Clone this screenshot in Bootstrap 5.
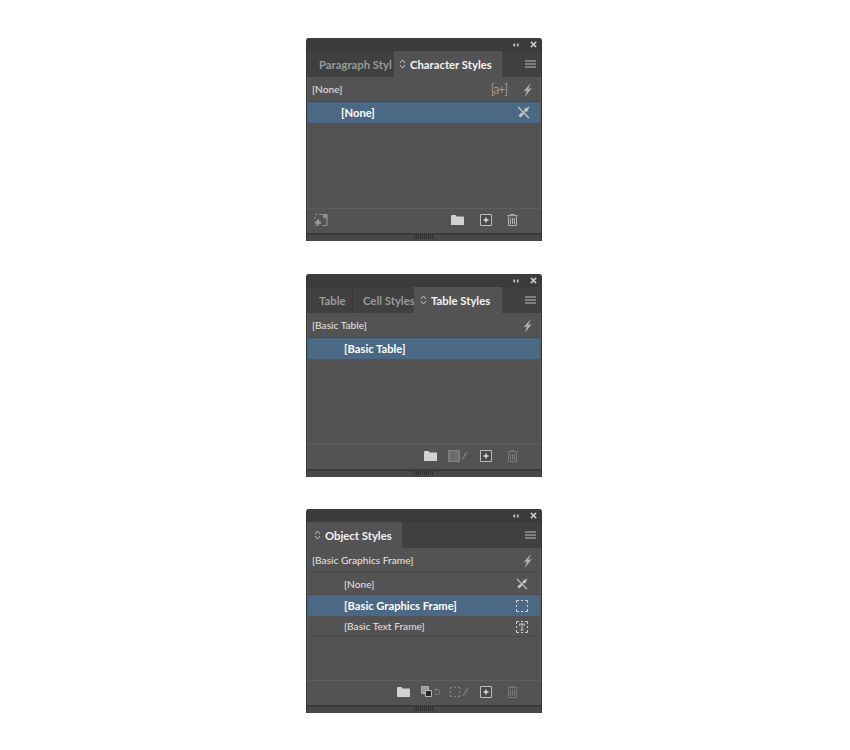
<!DOCTYPE html>
<html lang="en">
<head>
    <meta charset="UTF-8">
    <title>Styles panels</title>
    <link rel="stylesheet" href="https://cdn.jsdelivr.net/npm/bootstrap@5.3.0/dist/css/bootstrap.min.css">
    <style>
        body {
            background-color: #fff;
            font-family: "Lato", "Liberation Sans", sans-serif;
        }
        .panel-stack {
            width: 236px;
            margin-left: 306px;
            padding-top: 38px;
        }
        .style-panel {
            height: 203px;
            background-color: #535353;
            border-radius: 3px 3px 0 0;
            border-left: 1px solid #3a3a3a;
            border-right: 1px solid #3a3a3a;
            color: #e6e6e6;
            font-size: 10.2px;
            overflow: hidden;
        }
        .panel-tall { height: 204px; }
        .gap-a { margin-bottom: 33px; }
        .gap-b { margin-bottom: 32px; }
        .title-bar {
            height: 13px;
            background-color: #3b3b3b;
            padding-right: 4px;
            gap: 11px;
        }
        .tab-strip {
            height: 26px;
            background-color: #404040;
        }
        .tab-item {
            height: 26px;
            line-height: 27px;
            font-size: 11.3px;
            font-weight: 700;
            color: #9a9a9a;
            white-space: nowrap;
            overflow: hidden;
            border-right: 1px solid #383838;
            flex: none;
        }
        .tab-on {
            background-color: #535353;
            color: #f4f4f4;
            border-right: 0;
        }
        .tab-on svg { margin-right: 4px; }
        .tab-para { width: 87px; padding-left: 12px; border-right: 0; }
        .tab-char { width: 108px; padding-left: 5px; }
        .tab-table { width: 46px; padding-left: 12px; }
        .tab-cell { width: 61px; padding-left: 10px; border-right: 0; }
        .tab-tstyles { width: 88px; padding-left: 6px; }
        .tab-object { width: 95px; padding-left: 7px; }
        .tab-menu { margin-left: auto; margin-right: 5px; }
        .panel-list {
            min-height: 0;
            border-left: 1px solid #5b5b5b;
            border-right: 1px solid #5b5b5b;
        }
        .style-row {
            height: 22px;
            padding-top: 1px;
            line-height: 21px;
            border-bottom: 1px solid #484848;
            padding-right: 10px;
        }
        .row-head { height: 25px; padding-left: 4px; padding-right: 8px; }
        .row-sel {
            height: 21px;
            padding-top: 0;
            background-color: #4b6884;
            border-bottom: 0;
            color: #fff;
            font-size: 11.2px;
            font-weight: 700;
        }
        .row-plain { height: 21px; }
        .row-indent { padding-left: 33px; }
        .row-indent-b { padding-left: 36px; padding-right: 12px; }
        .plus-glyph {
            font-size: 13px;
            font-weight: 300;
            letter-spacing: -1.2px;
            color: #c4c4c4;
            margin-right: 16px;
        }
        .panel-foot {
            height: 25px;
            padding: 0 23px 2px 7px;
            border-top: 1px solid #5e5e5e;
        }
        .mr-8 { margin-right: 8px; }
        .mr-11 { margin-right: 11px; }
        .mr-12 { margin-right: 12px; }
        .mr-15 { margin-right: 15px; }
        .mr-16 { margin-right: 16px; }
        .trash-on { color: #b4b4b4; }
        .trash-dim { color: #797979; }
        .grip-bar {
            height: 8px;
            background-color: #484848;
            border-top: 2px solid #3a3a3a;
        }
        svg { display: block; flex: none; }
    </style>
</head>
<body>
    <svg width="0" height="0" class="position-absolute">
        <symbol id="i-collapse" viewBox="0 0 8 6"><path d="M3.5 0.5 0.8 3l2.7 2.5zM7.5 0.5 4.8 3l2.7 2.5z" fill="#bdbdbd"/></symbol>
        <symbol id="i-close" viewBox="0 0 8 8"><path d="M1 1l6 6M7 1 1 7" stroke="#c4c4c4" stroke-width="2"/></symbol>
        <symbol id="i-updown" viewBox="0 0 7 10"><path d="M1 4 3.500 1 6 4M1 6l2.500 3L6 6" fill="none" stroke="#c4c4c4" stroke-width="1"/></symbol>
        <symbol id="i-menu" viewBox="0 0 11 8"><path d="M0 1h11M0 4h11M0 7h11" stroke="#c0c0c0" stroke-width="1.200"/></symbol>
        <symbol id="i-bolt" viewBox="0 0 9 14"><path d="M8 0 .5 8.300l3.500-.8L1.800 14 8.800 5 5.200 6z" fill="#b2b2b2"/></symbol>
        <symbol id="i-pinx" viewBox="0 0 13 13"><path d="M1 1l11 11" stroke="#c8c8c8" stroke-width="1.300"/><path d="M12 1 5 8" stroke="#c8c8c8" stroke-width="1.300"/><path d="M9 1.500l2.500 2.500-2 2-2.500-2.500zM4.500 6.500l2 2-3 3-2-2z" fill="#c8c8c8"/></symbol>
        <symbol id="i-frame" viewBox="0 0 12 12"><path d="M.5 3V.5H3M5 .5h2M9 .5h2.500V3M11.500 5v2M11.500 9v2.500H9M7 11.500H5M3 11.500H.5V9M.5 7V5" fill="none" stroke="#d6d6d6" stroke-width="1"/></symbol>
        <symbol id="i-textframe" viewBox="0 0 12 12"><path d="M.5 3V.5H3M5 .5h2M9 .5h2.500V3M11.500 5v2M11.500 9v2.500H9M7 11.500H5M3 11.500H.5V9M.5 7V5" fill="none" stroke="#cfcfcf"/><path d="M3.500 4.500V3h5v1.500M6 3v6M4.500 9h3" fill="none" stroke="#cfcfcf"/></symbol>
        <symbol id="i-load" viewBox="0 0 14 14"><path d="M5 1.500h8v11H8M1 1.500h2M1 4v2M1 12.500h2" fill="none" stroke="#8f8f8f" stroke-width="1.200"/><path d="M9 1h4v4H9z" fill="#8f8f8f"/><path d="M1 9.500h6M4 6.500v6" stroke="#a0a0a0" stroke-width="2"/></symbol>
        <symbol id="i-folder" viewBox="0 0 13 10"><path d="M0 1.200C0 .5.500 0 1.200 0h3.300l1.200 1.500H12c.6 0 1 .4 1 1V10H0z" fill="#d2d2d2"/></symbol>
        <symbol id="i-new" viewBox="0 0 12 12"><path d="M.5.500h11v11H.5z" fill="#4a4a4a" stroke="#bcbcbc"/><path d="M3.500 6h5M6 3.500v5" stroke="#dcdcdc" stroke-width="1.400"/></symbol>
        <symbol id="i-trash" viewBox="0 0 11 12"><path d="M0 1.700h11M3.500 1.500V.5h4v1M1.500 2.500v9h8v-9M3.500 4v6M5.500 4v6M7.500 4v6" fill="none" stroke="currentColor" stroke-width="1"/></symbol>
        <symbol id="i-table" viewBox="0 0 20 12"><path d="M.5.500h11v11H.5z" fill="#6e6e6e" stroke="#858585"/><path d="M4.500 1v10" stroke="#5e5e5e"/><path d="M19 2l-5 8" stroke="#7b7b7b" stroke-width="1.300"/><path d="M16 3l2 3" stroke="#7b7b7b"/></symbol>
        <symbol id="i-layers" viewBox="0 0 20 12"><path d="M.5.500h7v7h-7z" fill="#9a9a9a" stroke="#b0b0b0"/><path d="M4.500 4.500h6v6h-6z" fill="#262626" stroke="#b8b8b8"/><path d="M14 3.500h2.500a2.500 2.500 0 0 1 0 5H14M15.500 2 13.500 3.500 15.500 5" fill="none" stroke="#808080"/></symbol>
        <symbol id="i-clearframe" viewBox="0 0 20 12"><path d="M1.500 3V1.500H3M5 1.500h2M9 1.500h1.500V3M10.500 5v2M10.500 9v1.500H9M7 10.500H5M3 10.500H1.500V9M1.500 7V5" fill="none" stroke="#858585" stroke-width="1.200"/><path d="M19 2l-5 8" stroke="#7b7b7b" stroke-width="1.300"/><path d="M16 3l2 3" stroke="#7b7b7b"/></symbol>
        <symbol id="i-grip" viewBox="0 0 20 4"><path d="M.5 0v4M2.500 0v4M4.500 0v4M6.500 0v4M8.500 0v4M10.500 0v4M12.500 0v4M14.500 0v4M16.500 0v4M18.500 0v4" stroke="#2e2e2e"/></symbol>
    </svg>

    <div class="panel-stack">
        <!-- character styles -->
        <div class="style-panel gap-a d-flex flex-column">
            <div class="title-bar d-flex align-items-center justify-content-end">
                <svg width="7" height="6"><use href="#i-collapse"/></svg>
                <svg width="7" height="7"><use href="#i-close"/></svg>
            </div>
            <div class="tab-strip d-flex align-items-center">
                <div class="tab-item tab-para">Paragraph Styl</div>
                <div class="tab-item tab-on d-flex align-items-center tab-char"><svg width="7" height="10"><use href="#i-updown"/></svg>Character Styles</div>
                <svg width="11" height="8" class="tab-menu"><use href="#i-menu"/></svg>
            </div>
            <div class="panel-list flex-grow-1">
                <div class="style-row row-head d-flex align-items-center justify-content-between">
                    <span>[None]</span>
                    <span class="d-flex align-items-center"><span class="plus-glyph">[a+]</span><svg width="9" height="14"><use href="#i-bolt"/></svg></span>
                </div>
                <div class="style-row row-sel row-indent d-flex align-items-center justify-content-between">
                    <span>[None]</span>
                    <svg width="13" height="13"><use href="#i-pinx"/></svg>
                </div>
            </div>
            <div class="panel-foot d-flex align-items-center justify-content-end">
                <svg width="14" height="14" class="me-auto"><use href="#i-load"/></svg>
                <svg width="13" height="10" class="mr-16"><use href="#i-folder"/></svg>
                <svg width="12" height="12" class="mr-15"><use href="#i-new"/></svg>
                <svg width="11" height="12" class="trash-on"><use href="#i-trash"/></svg>
            </div>
            <div class="grip-bar d-flex justify-content-center"><svg width="20" height="4"><use href="#i-grip"/></svg></div>
        </div>

        <!-- table styles -->
        <div class="style-panel gap-b d-flex flex-column">
            <div class="title-bar d-flex align-items-center justify-content-end">
                <svg width="7" height="6"><use href="#i-collapse"/></svg>
                <svg width="7" height="7"><use href="#i-close"/></svg>
            </div>
            <div class="tab-strip d-flex align-items-center">
                <div class="tab-item tab-table">Table</div>
                <div class="tab-item tab-cell">Cell Styles</div>
                <div class="tab-item tab-on d-flex align-items-center tab-tstyles"><svg width="7" height="10"><use href="#i-updown"/></svg>Table Styles</div>
                <svg width="11" height="8" class="tab-menu"><use href="#i-menu"/></svg>
            </div>
            <div class="panel-list flex-grow-1">
                <div class="style-row row-head d-flex align-items-center justify-content-between">
                    <span>[Basic Table]</span>
                    <svg width="9" height="14"><use href="#i-bolt"/></svg>
                </div>
                <div class="style-row row-sel row-indent-b d-flex align-items-center">
                    <span>[Basic Table]</span>
                </div>
            </div>
            <div class="panel-foot d-flex align-items-center justify-content-end">
                <svg width="13" height="10" class="mr-11"><use href="#i-folder"/></svg>
                <svg width="20" height="12" class="mr-12"><use href="#i-table"/></svg>
                <svg width="12" height="12" class="mr-15"><use href="#i-new"/></svg>
                <svg width="11" height="12" class="trash-dim"><use href="#i-trash"/></svg>
            </div>
            <div class="grip-bar d-flex justify-content-center"><svg width="20" height="4"><use href="#i-grip"/></svg></div>
        </div>

        <!-- object styles -->
        <div class="style-panel panel-tall d-flex flex-column">
            <div class="title-bar d-flex align-items-center justify-content-end">
                <svg width="7" height="6"><use href="#i-collapse"/></svg>
                <svg width="7" height="7"><use href="#i-close"/></svg>
            </div>
            <div class="tab-strip d-flex align-items-center">
                <div class="tab-item tab-on d-flex align-items-center tab-object"><svg width="7" height="10"><use href="#i-updown"/></svg>Object Styles</div>
                <svg width="11" height="8" class="tab-menu"><use href="#i-menu"/></svg>
            </div>
            <div class="panel-list flex-grow-1">
                <div class="style-row row-head d-flex align-items-center justify-content-between">
                    <span>[Basic Graphics Frame]</span>
                    <svg width="9" height="14"><use href="#i-bolt"/></svg>
                </div>
                <div class="style-row row-indent-b d-flex align-items-center justify-content-between">
                    <span>[None]</span>
                    <svg width="12" height="12"><use href="#i-pinx"/></svg>
                </div>
                <div class="style-row row-sel row-indent-b d-flex align-items-center justify-content-between">
                    <span>[Basic Graphics Frame]</span>
                    <svg width="12" height="12"><use href="#i-frame"/></svg>
                </div>
                <div class="style-row row-plain row-indent-b d-flex align-items-center justify-content-between">
                    <span>[Basic Text Frame]</span>
                    <svg width="12" height="12"><use href="#i-textframe"/></svg>
                </div>
            </div>
            <div class="panel-foot d-flex align-items-center justify-content-end">
                <svg width="13" height="10" class="mr-11"><use href="#i-folder"/></svg>
                <svg width="20" height="12" class="mr-8"><use href="#i-layers"/></svg>
                <svg width="20" height="12" class="mr-11"><use href="#i-clearframe"/></svg>
                <svg width="12" height="12" class="mr-15"><use href="#i-new"/></svg>
                <svg width="11" height="12" class="trash-dim"><use href="#i-trash"/></svg>
            </div>
            <div class="grip-bar d-flex justify-content-center"><svg width="20" height="4"><use href="#i-grip"/></svg></div>
        </div>
    </div>
    <script src="https://cdn.jsdelivr.net/npm/bootstrap@5.3.0/dist/js/bootstrap.bundle.min.js"></script>
</body>
</html>
